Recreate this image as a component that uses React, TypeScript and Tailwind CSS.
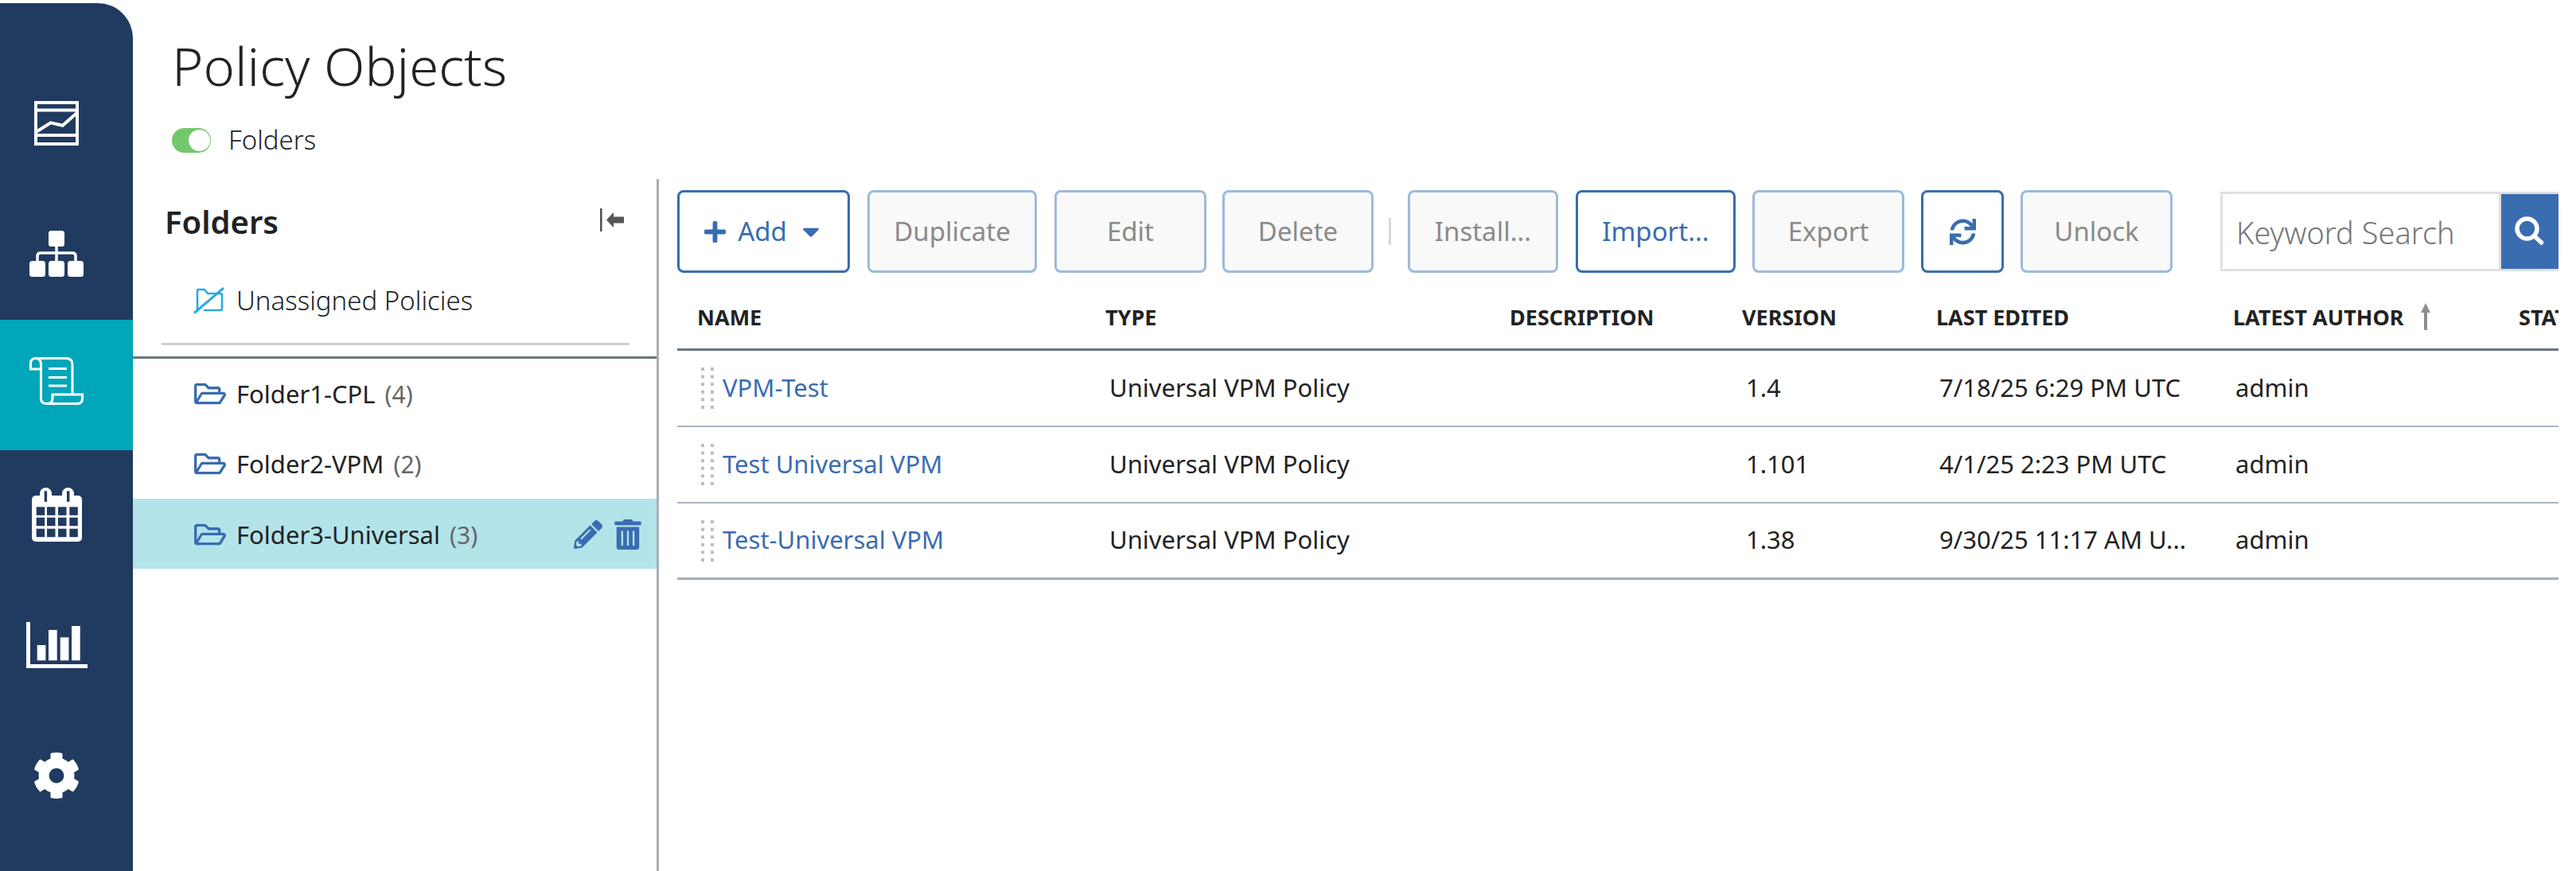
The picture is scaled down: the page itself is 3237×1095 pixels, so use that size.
import { FaCaretDown, FaCog, FaPencilAlt, FaPlus, FaRegFolderOpen, FaSync, FaTrashAlt } from 'react-icons/fa'

const NAVY = '#213a60'

function ReportIcon() {
  return (
    <svg width="56" height="56" viewBox="0 0 56 56" fill="none" stroke="white" strokeWidth="4">
      <rect x="2" y="2" width="52" height="52" />
      <path d="M2 11.5H54M2 43H54" />
      <path d="M3 38.5L20.7 27.3L35.7 30.7L53 15.5" />
    </svg>
  )
}

function TreeIcon() {
  return (
    <svg width="68" height="58" viewBox="0 0 68 58" fill="white">
      <rect x="24" y="0" width="20" height="20" rx="3.5" />
      <rect x="0" y="38" width="20" height="20" rx="3.5" />
      <rect x="24" y="38" width="20" height="20" rx="3.5" />
      <rect x="48" y="38" width="20" height="20" rx="3.5" />
      <path d="M10 40V32Q10 28 14 28H54Q58 28 58 32V40M34 18V40" fill="none" stroke="white" strokeWidth="3.5" />
    </svg>
  )
}

function ScrollIcon() {
  return (
    <svg width="68" height="60" viewBox="0 0 68 60" fill="none" stroke="white" strokeWidth="3">
      <path d="M8 1.5H46Q54 1.5 54 9.5V46" />
      <path d="M14.5 9V52Q14.5 58.5 22 58.5H60Q66.5 58.5 66.5 52V47H29V52Q29 58.5 22 58.5" />
      <path d="M14.5 9Q14.5 1.5 8 1.5Q1.5 1.5 1.5 8V15H14.5" />
      <path d="M24 14.5H47M24 25.5H47M24 36H47" />
    </svg>
  )
}

function CalendarIcon() {
  const xs = [5.7, 19, 33, 47.3]
  const ys = [24.3, 37.7, 51.7]
  return (
    <svg width="63" height="68" viewBox="0 0 63 68" fill="white">
      <rect x="0" y="10" width="63" height="58" rx="5" />
      <rect x="10" y="0" width="15" height="20" rx="7.5" />
      <rect x="38" y="0" width="15" height="20" rx="7.5" />
      <rect x="15.7" y="4.3" width="3.4" height="13.5" fill={NAVY} />
      <rect x="44" y="4.3" width="3.4" height="13.5" fill={NAVY} />
      {ys.map((y) =>
        xs.map((x) => <rect key={`${x}-${y}`} x={x} y={y} width="10.5" height="10.5" fill={NAVY} />),
      )}
    </svg>
  )
}

function ChartIcon() {
  return (
    <svg width="77" height="58" viewBox="0 0 77 58" fill="white">
      <rect x="0" y="0" width="5" height="58" />
      <rect x="0" y="53" width="77" height="5" />
      <rect x="13.7" y="29" width="10.7" height="19.3" />
      <rect x="28" y="10" width="10.7" height="38.3" />
      <rect x="42.7" y="19.3" width="10.7" height="29" />
      <rect x="57" y="5" width="10.7" height="43.3" />
    </svg>
  )
}

function UnassignedIcon() {
  return (
    <svg width="39" height="34" viewBox="0 0 39 34" fill="none" stroke="#29abe2" strokeWidth="2.6">
      <path d="M5 28V4Q5 3 6 3H14L18 8H34Q36 8 36 10V27Q36 29 34 29H13" />
      <path d="M1 32.5L38 1" strokeWidth="3" />
    </svg>
  )
}

function CollapseIcon() {
  return (
    <svg width="30" height="29" viewBox="0 0 30 29" fill="#555">
      <rect x="0" y="0" width="2.6" height="29" />
      <path d="M8 14.5L17 5V10.5H30V18.5H17V24Z" />
    </svg>
  )
}

function Grip() {
  const rows = [2, 11.6, 21.2, 30.8, 40.4, 50]
  return (
    <svg width="17" height="54" viewBox="0 0 17 54" fill="#bdbdbd" className="shrink-0">
      {rows.map((y) => (
        <g key={y}>
          <rect x="0" y={y} width="4" height="4" />
          <rect x="12" y={y} width="4" height="4" />
        </g>
      ))}
    </svg>
  )
}

const navItems = [
  { icon: <ReportIcon />, cls: 'pb-[3px]' },
  { icon: <TreeIcon />, cls: 'pb-[3px]' },
  { icon: <ScrollIcon />, cls: 'bg-[#00a6b9] pb-[10px]' },
  { icon: <CalendarIcon />, cls: 'pb-[3px]' },
  { icon: <ChartIcon />, cls: 'pb-[3px]' },
  { icon: <FaCog size={60} color="white" />, cls: 'pb-[3px]' },
]

const folders = [
  { name: 'Folder1-CPL', count: 4 },
  { name: 'Folder2-VPM', count: 2 },
  { name: 'Folder3-Universal', count: 3, selected: true },
]

const policies = [
  { name: 'VPM-Test', version: '1.4', edited: '7/18/25 6:29 PM UTC', author: 'admin' },
  { name: 'Test Universal VPM', version: '1.101', edited: '4/1/25 2:23 PM UTC', author: 'admin' },
  { name: 'Test-Universal VPM', version: '1.38', edited: '9/30/25 11:17 AM U...', author: 'admin' },
]

const gridCols = 'grid grid-cols-[538px_508px_292px_244px_373px_359px_50px]'
const btnBase =
  'flex h-[104px] shrink-0 items-center justify-center rounded-lg border-[3px] text-[33px] font-normal'
const btnOn = 'border-[#3a6cb0] bg-white text-[#3a6cb0]'
const btnOff = 'border-[#9fb9da] bg-[#f9f9f9] text-[#8a8a8a]'

export default function App() {
  return (
    <div className="flex h-[1095px] w-[3237px] overflow-hidden bg-white font-['Noto_Sans',sans-serif] text-[#222]">
      <aside className="mt-[4px] flex w-[167px] shrink-0 flex-col rounded-tr-[44px] bg-[#213a60] pt-[70px]">
        {navItems.map((item, i) => (
          <div key={i} className={`flex h-[164px] items-center justify-center pr-[25px] ${item.cls}`}>
            {item.icon}
          </div>
        ))}
      </aside>

      <main className="flex min-w-0 flex-1 flex-col">
        <header className="flex h-[225px] shrink-0 flex-col pl-[49px] pt-[46px]">
          <h1 className="text-[67px] leading-[72px] font-light">Policy Objects</h1>
          <div className="mt-[42px] flex items-center gap-[22px]">
            <div className="flex h-[31px] w-[49px] items-center justify-end rounded-full bg-[#73c86c] pr-[1px]">
              <div className="h-[27px] w-[27px] rounded-full bg-white" />
            </div>
            <span className="text-[33px] leading-[32px] font-light">Folders</span>
          </div>
        </header>

        <div className="flex min-h-0 flex-1">
          <section className="flex w-[661px] shrink-0 flex-col border-r-[3px] border-[#a8b0b5]">
            <div className="flex h-[108px] items-center justify-between pl-[40px] pr-[41px]">
              <h2 className="text-[40px] font-semibold">Folders</h2>
              <div className="mb-[6px]">
                <CollapseIcon />
              </div>
            </div>
            <div className="flex h-[90px] items-center gap-[15px] pl-[76px]">
              <UnassignedIcon />
              <span className="text-[33px] font-light">Unassigned Policies</span>
            </div>
            <div className="ml-[36px] mr-[34px] mt-[8px] h-[3px] bg-[#d0d0d0]" />
            <div className="mt-[14px] h-[3px] bg-[#6c757d]" />
            {folders.map((folder) => (
              <div
                key={folder.name}
                className={`flex h-[88px] items-center pl-[77px] pr-[17px] ${folder.selected ? 'bg-[#b2e4ea] pt-[2px]' : ''}`}
              >
                <FaRegFolderOpen size={40} color="#3a6cb0" />
                <span className="ml-[13px] text-[31px] font-normal">{folder.name}</span>
                <span className="ml-[12px] text-[30px] font-normal text-[#666]">({folder.count})</span>
                {folder.selected && (
                  <div className="ml-auto flex items-center gap-[13px]">
                    <FaPencilAlt size={36} color="#3a6cb0" />
                    <FaTrashAlt size={38} color="#3a6cb0" />
                  </div>
                )}
              </div>
            ))}
          </section>

          <section className="ml-[23px] flex w-[2364px] shrink-0 flex-col overflow-hidden">
            <div className="mt-[14px] flex items-center">
              <button type="button" className={`${btnBase} ${btnOn} w-[217px] gap-[13px]`}>
                <FaPlus size={31} />
                Add
                <FaCaretDown size={34} />
              </button>
              <button type="button" className={`${btnBase} ${btnOff} ml-[22px] w-[213px]`}>Duplicate</button>
              <button type="button" className={`${btnBase} ${btnOff} ml-[22px] w-[191px]`}>Edit</button>
              <button type="button" className={`${btnBase} ${btnOff} ml-[20px] w-[190px]`}>Delete</button>
              <div className="ml-[19px] h-[34px] w-[3px] bg-[#d8d8d8]" />
              <button type="button" className={`${btnBase} ${btnOff} ml-[21px] w-[189px]`}>Install...</button>
              <button type="button" className={`${btnBase} ${btnOn} ml-[22px] w-[201px]`}>Import...</button>
              <button type="button" className={`${btnBase} ${btnOff} ml-[21px] w-[191px]`}>Export</button>
              <button type="button" className={`${btnBase} ${btnOn} ml-[21px] w-[104px]`}>
                <FaSync size={33} />
              </button>
              <button type="button" className={`${btnBase} ${btnOff} ml-[21px] w-[191px]`}>Unlock</button>
              <div className="ml-[60px] flex h-[100px] w-[425px] shrink-0 border-y-[3px] border-l-[3px] border-[#e0e0e0]">
                <input
                  readOnly
                  placeholder="Keyword Search"
                  className="min-w-0 flex-1 border-r-[3px] border-[#e0e0e0] bg-white pl-[17px] pt-[2px] text-[38px] font-light outline-none placeholder:text-[#777]"
                />
                <div className="flex w-[72px] shrink-0 items-center justify-center bg-[#3a6cb0]">
                  <svg width="38" height="38" viewBox="0 0 38 38" fill="none" stroke="white" strokeLinecap="round">
                    <circle cx="15.5" cy="15.5" r="12.5" strokeWidth="5.5" />
                    <path d="M25 25L33.5 33" strokeWidth="5.5" />
                  </svg>
                </div>
              </div>
            </div>

            <div className={`${gridCols} h-[98px] items-center border-b-[3px] border-[#6c757d] pt-[18px] text-[27px] font-bold uppercase`}>
              <span className="pl-[25px]">Name</span>
              <span>Type</span>
              <span>Description</span>
              <span>Version</span>
              <span>Last Edited</span>
              <span className="flex items-center">
                Latest Author
                <svg width="14" height="34" viewBox="0 0 14 34" fill="#8a8f94" className="ml-[21px] -mt-[4px]">
                  <path d="M7 0L13 12H9V34H5V12H1Z" />
                </svg>
              </span>
              <span className="whitespace-nowrap">Status</span>
            </div>

            {policies.map((policy, i) => (
              <div
                key={policy.name}
                className={`${gridCols} h-[96px] items-center pb-[2px] text-[31px] font-normal ${
                  i === policies.length - 1 ? 'border-b-[3px] border-[#a5adb3]' : 'border-b-2 border-[#a8b3c0]'
                }`}
              >
                <span className="flex items-center pl-[30px]">
                  <Grip />
                  <a className="ml-[10px] text-[#3a6cb0]">{policy.name}</a>
                </span>
                <span className="pl-[5px]">Universal VPM Policy</span>
                <span />
                <span className="pl-[5px]">{policy.version}</span>
                <span className="pl-[4px]">{policy.edited}</span>
                <span className="pl-[3px]">{policy.author}</span>
                <span />
              </div>
            ))}
          </section>
        </div>
      </main>
    </div>
  )
}
